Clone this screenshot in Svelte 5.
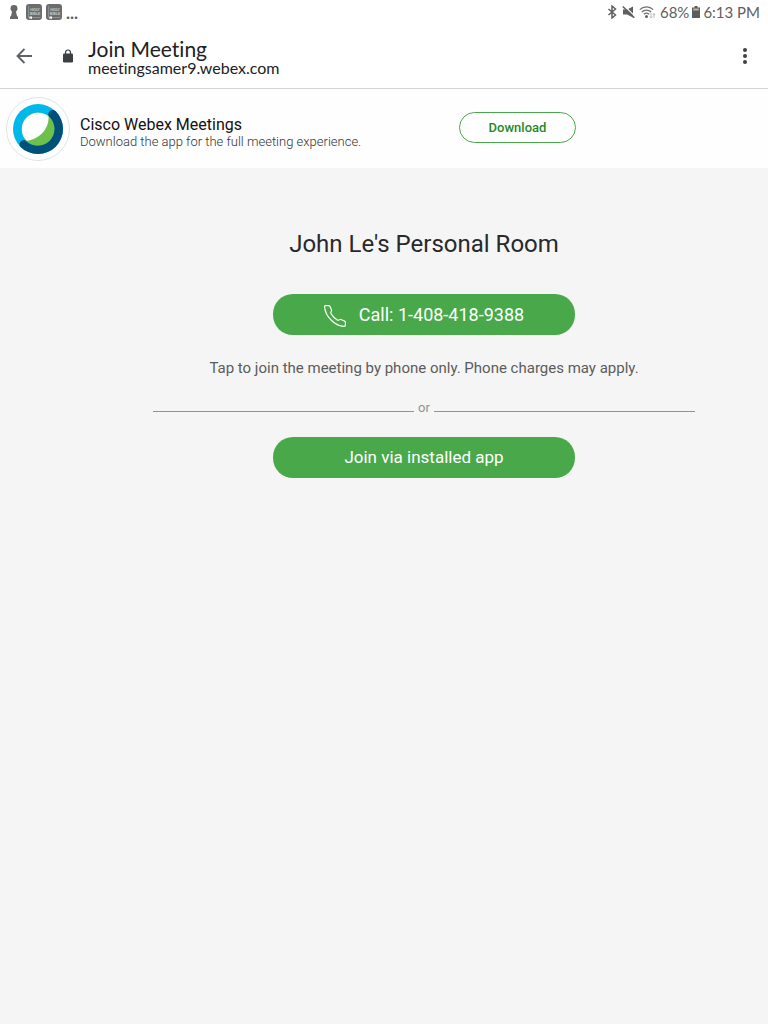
<script>
  const books = [0, 1];
  const roomName = "John Le's Personal Room";
  const phone = '1-408-418-9388';
</script>

<div class="page">
  <div class="status">
    <div class="group">
      <svg class="keyhole" width="10" height="16" viewBox="0 0 10 16" aria-hidden="true">
        <path d="M5 1a3.500 3.500 0 0 0-3.500 3.400c0 1.400.6 2.300 1.500 3L2.200 11.500 1 13v2h8v-2l-1.200-1.500L7 7.400c.9-.7 1.500-1.600 1.500-3A3.500 3.500 0 0 0 5 1z" fill="#686868" />
      </svg>
      {#each books as book (book)}
        <svg width="16" height="16" viewBox="0 0 16 16" aria-hidden="true">
          <rect width="16" height="16" rx="3" fill="#6c6c6c" />
          <path d="M2.500 2v11M2.500 13.500h12" stroke="#8f8f8f" stroke-width="1" fill="none" />
          <text class="cover" x="9" y="6.500" text-anchor="middle">HOLY</text>
          <text class="cover" x="9" y="10.500" text-anchor="middle">BIBLE</text>
          <path d="M3.500 12.500h2.500v2.800L4.750 14.300 3.500 15.300z" fill="#fff" />
        </svg>
      {/each}
      <span class="more">...</span>
    </div>
    <div class="group right">
      <svg class="bt" width="10" height="14" viewBox="0 0 10 14" aria-hidden="true">
        <path d="M1.500 4l7 6L5 13V1l3.500 3-7 6" fill="none" stroke="#606060" stroke-width="1.500" />
      </svg>
      <svg width="14" height="14" viewBox="0 0 14 14" aria-hidden="true">
        <path d="M1 4.500h4L11 1.500v11L5 9.500H1z" fill="#606060" />
        <path d="M2.500 .8l11 11" stroke="#fff" stroke-width="1.200" />
        <path d="M.8 1.500L12.300 12.800" stroke="#606060" stroke-width="1.600" />
      </svg>
      <svg width="18" height="14" viewBox="0 0 18 14" aria-hidden="true">
        <g fill="none" stroke="#707070" stroke-width="1.300">
          <path d="M.8 4.600a9.500 9.500 0 0 1 13.400 0" />
          <path d="M2.800 7a6.700 6.700 0 0 1 9.400 0" />
          <path d="M4.800 9.300a4 4 0 0 1 5.400 0" />
        </g>
        <circle cx="7.500" cy="11.500" r="1.500" fill="#606060" />
        <path d="M12 8v5M10.800 11.500L12 13l1.200-1.500M15 13V8.500M13.800 10L15 8.500l1.200 1.500" fill="none" stroke="#bbb" />
      </svg>
      <span>68%</span>
      <svg width="8" height="12" viewBox="0 0 8 12" aria-hidden="true">
        <path d="M2.500 0h3v1.500H8V12H0V1.500h2.500z" fill="#5c5c5c" />
        <path d="M1.200 2.500h5.600v2H1.200z" fill="#b4b4b4" />
      </svg>
      <span>6:13 PM</span>
    </div>
  </div>

  <header class="toolbar">
    <button class="icon" aria-label="Back">
      <svg width="16" height="16" viewBox="0 0 16 16">
        <path d="M16 8H1.500M8.500 1L1.500 8l7 7" fill="none" stroke="#5f6368" stroke-width="1.900" />
      </svg>
    </button>
    <svg class="lock" width="10" height="14" viewBox="0 0 10 14" aria-hidden="true">
      <path d="M2.500 6V3.500a2.500 2.500 0 0 1 5 0V6" fill="none" stroke="#3c4043" stroke-width="1.200" />
      <rect y="4.500" width="10" height="9" rx="1.200" fill="#3c4043" />
    </svg>
    <div class="site">
      <div class="title">Join Meeting</div>
      <div class="url">meetingsamer9.webex.com</div>
    </div>
    <button class="icon menu" aria-label="More options">
      <svg width="4" height="16" viewBox="0 0 4 16">
        <g fill="#3c4043"><circle cx="2" cy="2" r="2" /><circle cx="2" cy="8" r="2" /><circle cx="2" cy="14" r="2" /></g>
      </svg>
    </button>
  </header>

  <section class="banner">
    <svg width="64" height="64" viewBox="0 0 64 64" aria-hidden="true">
      <circle cx="32" cy="32" r="31.500" fill="#fff" stroke="#e2e2e2" />
      <circle cx="32" cy="32" r="25" fill="#00b8ea" />
      <path d="M49.700 14.300A25 25 0 0 1 14.300 49.700A4.200 4.200 0 0 1 19.500 43.500A16.500 16.500 0 0 0 43.500 20.500A4.200 4.200 0 0 1 49.700 14.300z" fill="#00507a" />
      <circle cx="32" cy="32" r="16.500" fill="#6dc04b" />
      <path d="M42.500 19.300C43.500 31 34 42.500 20.500 43.800A16.500 16.500 0 0 1 42.500 19.300z" fill="#fff" />
    </svg>
    <div class="app">
      <div class="name">Cisco Webex Meetings</div>
      <div class="desc">Download the app for the full meeting experience.</div>
    </div>
    <button class="download">Download</button>
  </section>

  <main>
    <h1>{roomName}</h1>
    <a class="primary call" href="tel:{phone}">
      <svg width="22" height="22" viewBox="1 1 22 22" aria-hidden="true">
        <path d="M1.600 3Q1.300 1.600 2.800 1.600H5.500Q6.500 1.600 7 2.500L8.400 5.500Q8.800 6.400 8.300 7.300Q7.400 8.800 8.300 10.100Q10.700 13.600 13.900 15.700Q15.200 16.500 16.500 15.800Q17.500 15.200 18.600 15.700L21.500 17Q22.400 17.500 22.400 18.600V21Q22.400 22.400 21 22.400C11.500 21.800 2.400 12.500 1.600 3z" fill="none" stroke="#fff" stroke-width="1.200" stroke-linejoin="round" />
      </svg>
      <span>Call: {phone}</span>
    </a>
    <p>Tap to join the meeting by phone only. Phone charges may apply.</p>
    <div class="or"><span>or</span></div>
    <button class="primary">Join via installed app</button>
  </main>
</div>

<style>
  :global(body) {
    margin: 0;
    background: #f5f5f5;
  }
  .page {
    font-family: Roboto, sans-serif;
  }
  button {
    font: inherit;
    cursor: pointer;
  }
  .status {
    display: flex;
    justify-content: space-between;
    align-items: center;
    height: 24px;
    padding: 0 8px 0 9px;
    background: #fff;
    color: #606060;
    font-size: 15px;
    font-family: Lato, "Noto Sans", sans-serif;
  }
  .group {
    display: flex;
    align-items: center;
    gap: 4px;
  }
  .keyhole {
    margin-right: 3px;
  }
  .cover {
    font: 700 4px Roboto, sans-serif;
    fill: #c4c4c4;
  }
  .more {
    font-size: 17px;
    font-weight: 700;
  }
  .right {
    gap: 3px;
  }
  .bt {
    margin-right: 2px;
  }
  .toolbar {
    display: flex;
    align-items: center;
    height: 64px;
    padding: 0 21px 0 16px;
    border-bottom: 1px solid #d4d4d4;
    background: #fff;
    font-family: Lato, "Noto Sans", sans-serif;
    font-variant-ligatures: none;
    color: #202124;
  }
  .icon {
    display: flex;
    padding: 0;
    border: 0;
    background: none;
  }
  .menu {
    margin-left: auto;
  }
  .lock {
    margin: 0 15px 0 31px;
  }
  .site {
    padding-top: 3px;
  }
  .title {
    font-size: 21px;
    line-height: 20px;
  }
  .url {
    font-size: 16px;
    line-height: 18px;
  }
  .banner {
    display: flex;
    align-items: center;
    padding: 8px 6px 7px;
    background: #fefefe;
  }
  .app {
    flex: 0 1 379px;
    margin-left: 10px;
    padding-top: 8px;
  }
  .name {
    font-size: 16px;
    line-height: 18px;
    color: #111;
  }
  .desc {
    font-size: 13px;
    line-height: 16px;
    font-weight: 300;
    color: #333;
  }
  .download {
    width: 117px;
    height: 31px;
    margin-bottom: 4px;
    border: 1px solid #49a94a;
    border-radius: 16px;
    background: #fff;
    color: #1f8a24;
    font-size: 13px;
    font-weight: 500;
  }
  main {
    display: flex;
    flex-direction: column;
    align-items: center;
    margin-left: 80px;
    padding: 60px 73px;
  }
  h1 {
    margin: 0 0 34px;
    font-size: 24px;
    line-height: 32px;
    font-weight: 400;
    color: #292929;
  }
  .primary {
    display: flex;
    align-items: center;
    justify-content: center;
    gap: 13px;
    box-sizing: border-box;
    width: 302px;
    max-width: 100%;
    height: 41px;
    padding: 0 0 1px;
    border: 0;
    border-radius: 20px;
    background: #49a94a;
    color: #fff;
    font-size: 17px;
    text-decoration: none;
  }
  .call {
    font-size: 18px;
  }
  .primary svg {
    margin-top: 4px;
  }
  p {
    margin: 23px 0 21px;
    font-size: 15px;
    line-height: 20px;
    color: #5c5c5c;
  }
  .or {
    display: flex;
    align-self: stretch;
    align-items: center;
    gap: 4px;
    margin-bottom: 20px;
    font-size: 13px;
    line-height: 18px;
    color: #929292;
  }
  .or::before,
  .or::after {
    content: "";
    flex: 1;
    height: 1px;
    margin-top: 6px;
    background: #929292;
  }
</style>
